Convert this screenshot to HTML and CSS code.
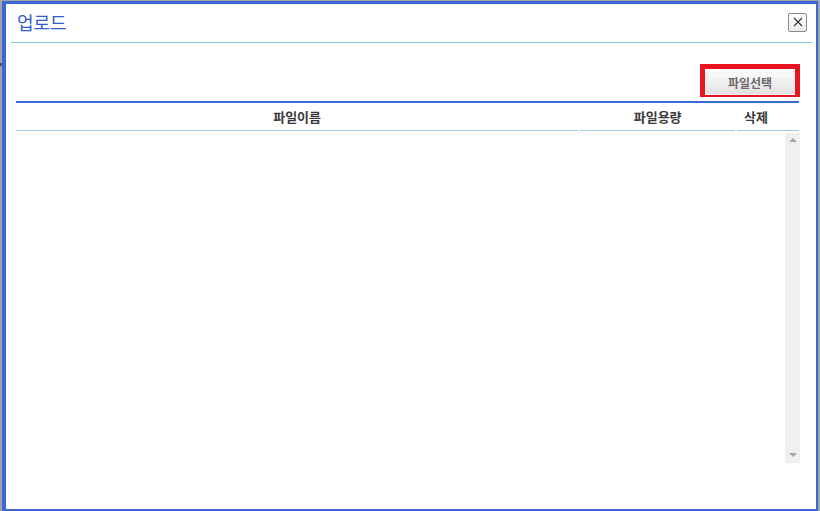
FILE: index.html
```html
<!DOCTYPE html>
<html lang="ko">
<head>
<meta charset="utf-8">
<title>업로드</title>
<link rel="stylesheet" href="styles.css">
</head>
<body>
<div class="mark"></div>
<div class="window">
  <div class="header">
    <h1 class="title">업로드</h1>
    <button class="close" type="button" aria-label="닫기">
      <svg width="10" height="10" viewBox="0 0 10 10"><path d="M1 1 L9 9 M9 1 L1 9" stroke="#333" stroke-width="1.1" fill="none"/></svg>
    </button>
  </div>
  <div class="content">
    <div class="toolbar">
      <div class="highlight"><button class="select" type="button">파일선택</button></div>
    </div>
    <div class="table">
      <div class="thead">
        <div class="th col-name">파일이름</div>
        <div class="th col-size">파일용량</div>
        <div class="th col-del">삭제</div>
      </div>
      <div class="tbody">
        <div class="rows"></div>
        <div class="scrollbar">
          <span class="arrow up"></span>
          <span class="arrow down"></span>
        </div>
      </div>
    </div>
  </div>
</div>
</body>
</html>
```
FILE: styles.css
```css
* { box-sizing: border-box; }
html, body { margin: 0; padding: 0; }
body {
  width: 820px;
  height: 511px;
  overflow: hidden;
  background: #a3a3a3;
  font-family: "Noto Sans CJK KR", "Noto Sans", sans-serif;
  position: relative;
}
.mark {
  position: absolute;
  left: 0;
  top: 63px;
  width: 2px;
  height: 3px;
  background: #555;
}
.window {
  margin: 1px 0 0 2px;
  width: 816px;
  height: 510px;
  background: #fff;
  border-style: solid;
  border-color: #3b68d4;
  border-width: 3px 2px 2px 4px;
}
.header {
  margin: 0 4px 0 5px;
  height: 39px;
  border-bottom: 1px solid #7fcbea;
  display: flex;
  align-items: center;
  justify-content: space-between;
  padding: 0 0 0 6px;
}
.title {
  margin: 0;
  font-size: 18px;
  font-weight: normal;
  color: #2f5cc6;
  line-height: 20px;
  padding-bottom: 2px;
}
.close {
  width: 19px;
  height: 19px;
  margin: 0 5px 2px 0;
  padding: 0;
  border: 1px solid #8a8a8a;
  border-radius: 2px;
  background: linear-gradient(#ffffff, #ececec);
  display: flex;
  align-items: center;
  justify-content: center;
}
.content {
  margin: 0 17px 0 10px;
}
.toolbar {
  display: flex;
  justify-content: flex-end;
  padding-top: 21px;
  height: 58px;
}
.highlight {
  border: 5px solid #e8141f;
  width: 100px;
  height: 33px;
  margin-right: -1px;
  padding: 0;
}
.select {
  width: 100%;
  height: 100%;
  margin: 0;
  padding: 0;
  border: 1px solid #f4f4f4;
  background: linear-gradient(#fafafa, #e2e2e2);
  font-family: "Noto Sans CJK KR", "Noto Sans", sans-serif;
  font-size: 12px;
  font-weight: bold;
  color: #6a6a6a;
  line-height: 20px;
}
.table {
  border-top: 2px solid #3b68d4;
}
.thead {
  display: flex;
  gap: 2px;
  height: 28px;
}
.th {
  border-bottom: 1px solid #9fcbe6;
  font-size: 13px;
  font-weight: bold;
  color: #3a3a3a;
  text-align: center;
  line-height: 28px;
  padding-bottom: 2px;
}
.col-name { width: 563px; }
.col-size { width: 155px; }
.col-del { width: 62px; padding-right: 24px; }
.tbody {
  display: flex;
  height: 332px;
  padding-top: 2px;
}
.rows { flex: 1; }
.scrollbar {
  width: 15px;
  margin-right: -1px;
  background: #f0f0f0;
  display: flex;
  flex-direction: column;
  justify-content: space-between;
  align-items: center;
  padding: 5px 0 6px;
}
.arrow {
  width: 0;
  height: 0;
  border-left: 4px solid transparent;
  border-right: 4px solid transparent;
}
.arrow.up { border-bottom: 4px solid #a6a6a6; }
.arrow.down { border-top: 4px solid #a6a6a6; }
```
